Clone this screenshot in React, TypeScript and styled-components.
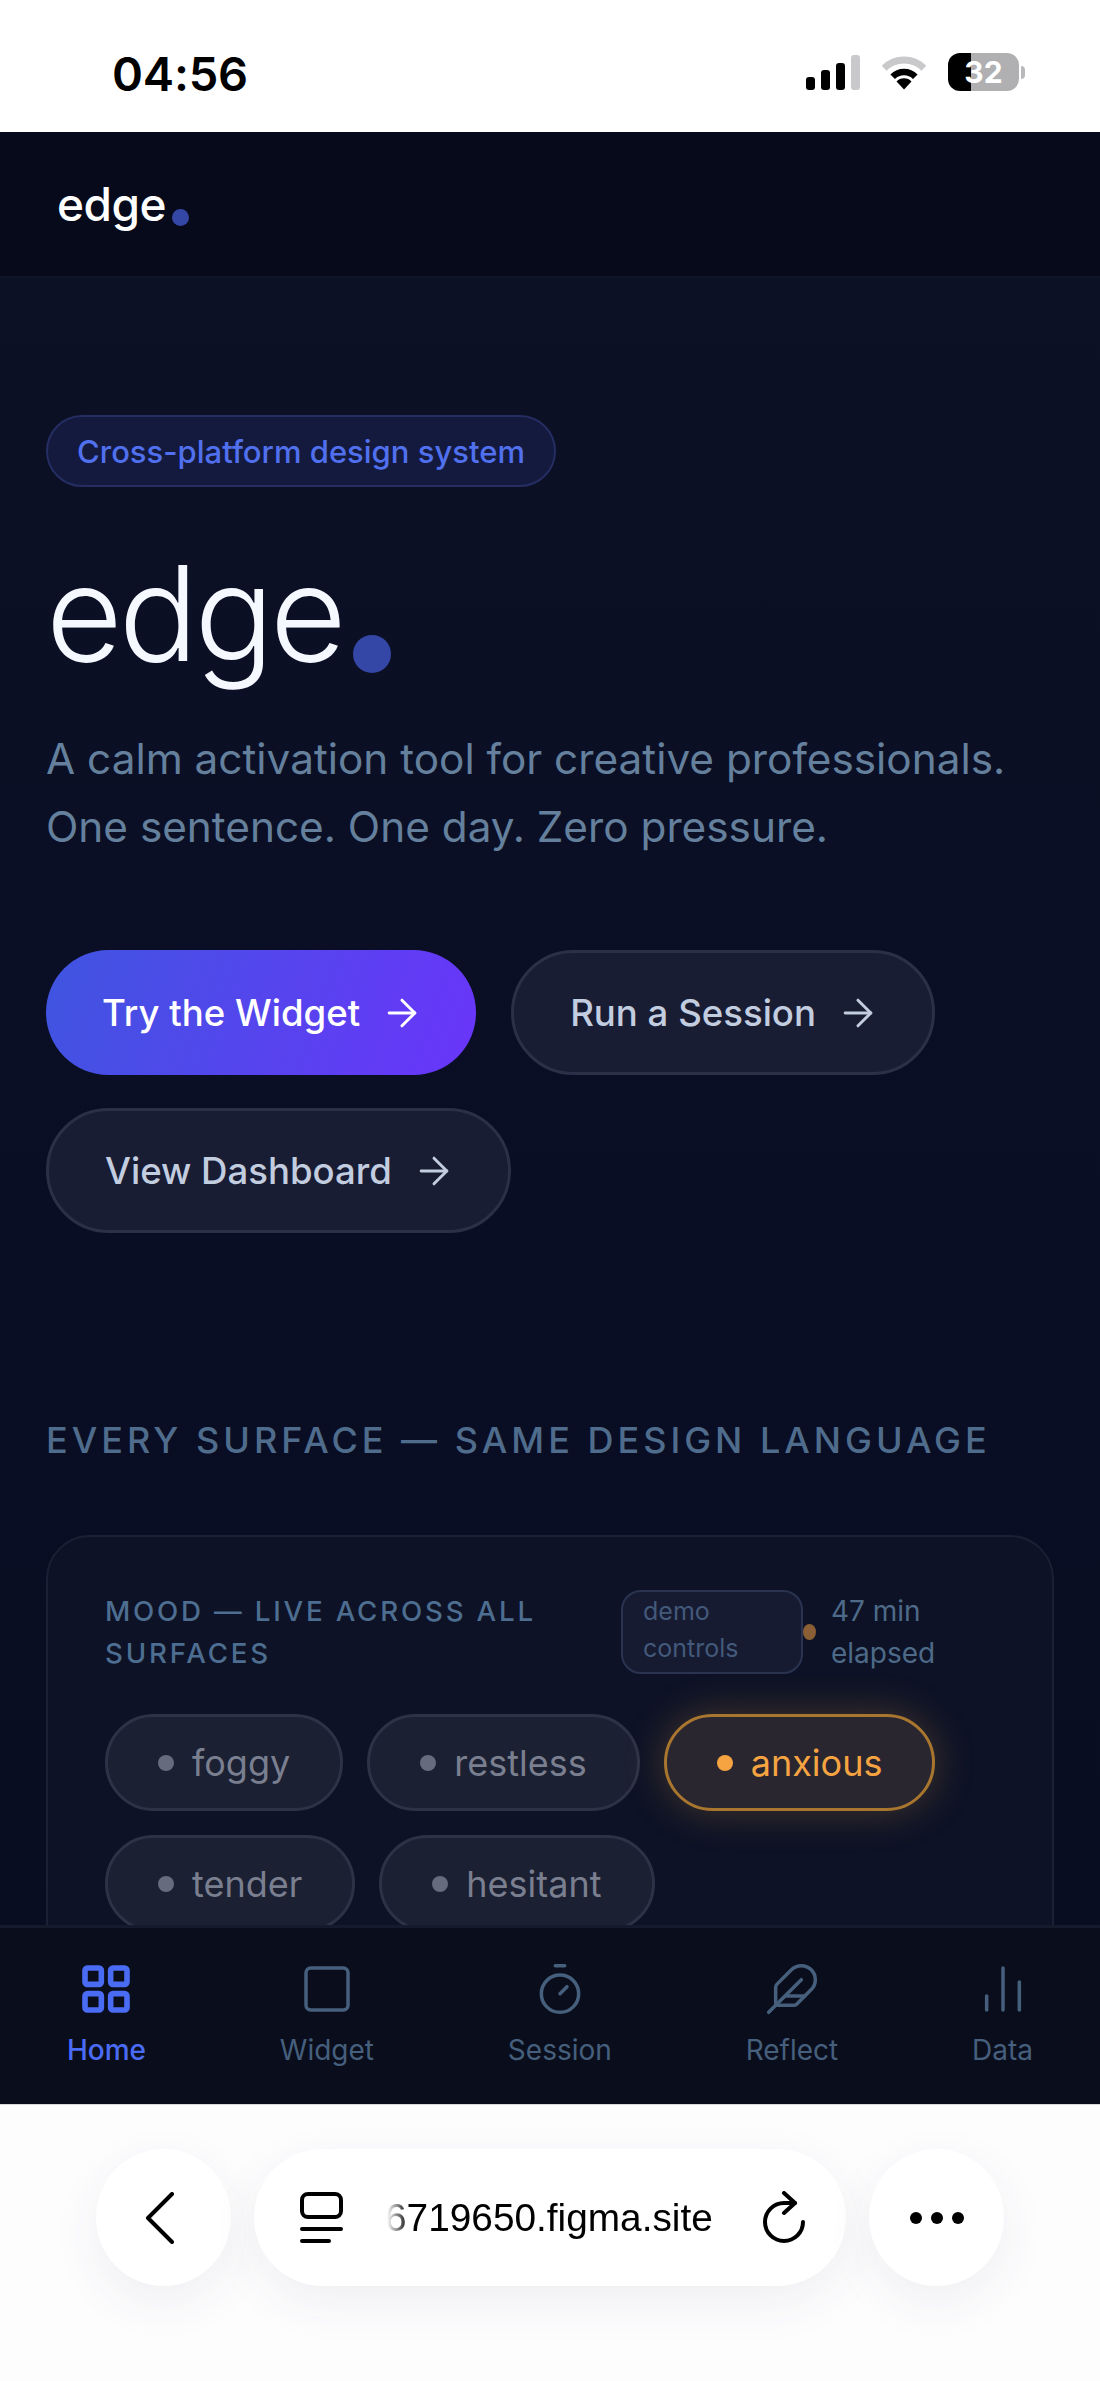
import styled, { createGlobalStyle } from 'styled-components';
import {
  ArrowRight,
  ChartNoAxesColumn,
  Feather,
  LayoutGrid,
  Square,
  Timer,
} from 'lucide-react';

const GlobalStyle = createGlobalStyle`
  html, body {
    margin: 0;
    padding: 0;
    background: #fff;
  }
  body {
    font-family: Inter, "Liberation Sans", sans-serif;
  }
`;

const Phone = styled.div`
  width: 1100px;
  height: 2381px;
  display: flex;
  flex-direction: column;
  overflow: hidden;
`;

const StatusBar = styled.div`
  height: 132px;
  flex: none;
  background: #fff;
  display: flex;
  align-items: center;
  justify-content: space-between;
  padding: 0 75px 0 112px;
  box-sizing: border-box;
`;

const Clock = styled.div`
  padding-top: 14px;
  font-size: 47px;
  font-weight: 600;
  color: #000;
  letter-spacing: -0.2px;
`;

const StatusIcons = styled.div`
  display: flex;
  align-items: center;
  gap: 21px;
  padding-top: 12px;
`;

const Signal = styled.div`
  display: flex;
  align-items: flex-end;
  gap: 6px;
  height: 36px;
`;

const SignalBar = styled.span<{ $h: number; $off?: boolean }>`
  width: 9px;
  height: ${(p) => p.$h}px;
  border-radius: 3px;
  background: ${(p) => (p.$off ? '#c9c9cc' : '#000')};
`;

const BatteryWrap = styled.div`
  display: flex;
  align-items: center;
  gap: 2px;
`;

const Battery = styled.div`
  width: 71px;
  height: 38px;
  border-radius: 12px;
  background: linear-gradient(to right, #000 23px, #b0afb2 23px);
  color: #fff;
  font-family: Inter, sans-serif;
  font-weight: 700;
  font-size: 30px;
  display: flex;
  align-items: center;
  justify-content: center;
`;

const BatteryTip = styled.span`
  width: 4px;
  height: 13px;
  border-radius: 0 4px 4px 0;
  background: #b9b8bb;
`;

const Screen = styled.div`
  flex: 1;
  min-height: 0;
  display: flex;
  flex-direction: column;
  background: linear-gradient(180deg, #0c1125 0%, #0a0e25 55%, #090d21 100%);
`;

const Header = styled.header`
  height: 146px;
  flex: none;
  box-sizing: border-box;
  padding-left: 57px;
  display: flex;
  align-items: center;
  background: #060a1b;
  border-bottom: 2px solid #10152a;
`;

const Logo = styled.div`
  font-size: 46px;
  font-weight: 500;
  letter-spacing: -0.5px;
  color: #fff;
  line-height: 1;
`;

const LogoDot = styled.span<{ $size: number; $drop: number; $gap: number }>`
  display: inline-block;
  width: ${(p) => p.$size}px;
  height: ${(p) => p.$size}px;
  margin-left: ${(p) => p.$gap}px;
  vertical-align: -${(p) => p.$drop}px;
  border-radius: 50%;
  background: #3547a6;
`;

const Main = styled.main`
  flex: 1;
  min-height: 0;
  overflow: hidden;
  padding: 137px 46px 0;
`;

const Pill = styled.div`
  display: inline-flex;
  align-items: center;
  height: 72px;
  box-sizing: border-box;
  padding: 0 29px;
  border-radius: 36px;
  background: #141a3e;
  border: 2px solid #252e63;
  color: #5070ee;
  font-size: 31px;
  font-weight: 500;
  vertical-align: top;
`;

const Title = styled.h1`
  margin: 60px 0 0;
  font-size: 132px;
  line-height: 1;
  font-weight: 300;
  letter-spacing: -3.8px;
  color: #f6f8ff;
`;

const Lead = styled.p`
  margin: 46px 0 0;
  font-size: 42.3px;
  line-height: 68px;
  font-weight: 400;
  color: #64809c;
`;

const Actions = styled.div`
  margin-top: 89px;
  display: flex;
  flex-wrap: wrap;
  gap: 33px 35px;
`;

const ActionButton = styled.button<{ $primary?: boolean }>`
  height: 125px;
  box-sizing: border-box;
  padding: 0 52px 0 56px;
  display: inline-flex;
  align-items: center;
  gap: 20px;
  border-radius: 63px;
  font-family: inherit;
  font-size: 36.6px;
  font-weight: 500;
  color: ${(p) => (p.$primary ? '#fff' : '#c3cde0')};
  background: ${(p) =>
    p.$primary ? 'linear-gradient(110deg, #3f55e0 0%, #6a35fa 100%)' : '#191d33'};
  border: ${(p) => (p.$primary ? 'none' : '3px solid #2a3048')};
`;

const SectionTitle = styled.h2`
  margin: 185px 0 0;
  font-size: 36px;
  line-height: 44px;
  font-weight: 500;
  letter-spacing: 4px;
  color: #4f6c8c;
`;

const Card = styled.section`
  margin-top: 73px;
  padding: 53px 57px 60px;
  border-radius: 44px;
  background: #0d1226;
  border: 2px solid #1a2036;
`;

const CardHead = styled.div`
  display: flex;
  align-items: center;
`;

const CardTitle = styled.div`
  flex: 1;
  min-width: 0;
  padding-right: 60px;
  font-size: 27.7px;
  line-height: 42px;
  font-weight: 500;
  letter-spacing: 2.8px;
  color: #4d6e90;
`;

const DemoBox = styled.div`
  width: 182px;
  height: 84px;
  flex: none;
  box-sizing: border-box;
  padding: 1px 20px;
  border-radius: 20px;
  background: #161b32;
  border: 2px solid #2a3350;
  font-size: 25px;
  line-height: 37px;
  color: #43597a;
`;

const Elapsed = styled.div`
  width: 192px;
  flex: none;
  display: flex;
  align-items: center;
  gap: 15px;
  font-size: 28px;
  line-height: 42px;
  color: #4d6a88;
`;

const ElapsedDot = styled.span`
  width: 13px;
  height: 16px;
  flex: none;
  border-radius: 50%;
  background: #8a5f35;
`;

const Chips = styled.div`
  margin-top: 40px;
  display: flex;
  flex-wrap: wrap;
  gap: 24px;
`;

const Chip = styled.div<{ $active?: boolean }>`
  height: 97px;
  box-sizing: border-box;
  padding: 0 50px;
  display: inline-flex;
  align-items: center;
  gap: 18px;
  border-radius: 49px;
  font-size: 36px;
  color: ${(p) => (p.$active ? '#f5a441' : '#7a7f90')};
  background: ${(p) => (p.$active ? '#292630' : '#1c2033')};
  border: 3px solid ${(p) => (p.$active ? '#a8762f' : '#2d3246')};
  box-shadow: ${(p) => (p.$active ? '0 0 40px rgba(245, 164, 65, 0.25)' : 'none')};
`;

const ChipDot = styled.span<{ $active?: boolean }>`
  width: 16px;
  height: 16px;
  border-radius: 50%;
  background: ${(p) => (p.$active ? '#f5a441' : '#666b7e')};
`;

const Nav = styled.nav`
  height: 179px;
  flex: none;
  box-sizing: border-box;
  padding-top: 33px;
  display: flex;
  justify-content: space-around;
  background: #0a0e1c;
  border-top: 3px solid #151a2c;
`;

const NavItem = styled.div<{ $active?: boolean }>`
  display: flex;
  flex-direction: column;
  align-items: center;
  gap: 15px;
  font-size: 28px;
  line-height: 36px;
  font-weight: ${(p) => (p.$active ? 500 : 400)};
  color: ${(p) => (p.$active ? '#4a6cf5' : '#465f7c')};
`;

const BrowserBar = styled.div`
  height: 277px;
  flex: none;
  box-sizing: border-box;
  padding-top: 44px;
  display: flex;
  justify-content: center;
  align-items: flex-start;
  gap: 23px;
  background: #fdfdfe;
  border-top: 1px solid #d8d8da;
`;

const RoundButton = styled.div<{ $nudge?: number }>`
  width: 135px;
  height: 137px;
  box-sizing: border-box;
  padding-right: ${(p) => p.$nudge ?? 0}px;
  border-radius: 50%;
  background: #fff;
  box-shadow: 0 16px 50px rgba(60, 50, 90, 0.07);
  display: flex;
  align-items: center;
  justify-content: center;
`;

const UrlPill = styled.div`
  width: 592px;
  height: 137px;
  box-sizing: border-box;
  padding: 0 40px 0 46px;
  border-radius: 69px;
  background: #fff;
  box-shadow: 0 16px 50px rgba(60, 50, 90, 0.07);
  display: flex;
  align-items: center;
`;

const UrlText = styled.div`
  flex: 1;
  min-width: 0;
  margin-left: 42px;
  overflow: hidden;
  white-space: nowrap;
  font-family: "Liberation Sans", Arial, sans-serif;
  font-size: 38.8px;
  color: #000;
  mask-image: linear-gradient(to right, transparent 2px, #000 24px);
`;

const Dots = styled.div`
  display: flex;
  gap: 9px;
`;

const Dot = styled.span`
  width: 12px;
  height: 12px;
  border-radius: 50%;
  background: #000;
`;

const moods = ['foggy', 'restless', 'anxious', 'tender', 'hesitant'];

const actions = [
  { label: 'Try the Widget', primary: true },
  { label: 'Run a Session' },
  { label: 'View Dashboard' },
];

const navItems = [
  { label: 'Home', Icon: LayoutGrid, active: true },
  { label: 'Widget', Icon: Square },
  { label: 'Session', Icon: Timer },
  { label: 'Reflect', Icon: Feather },
  { label: 'Data', Icon: ChartNoAxesColumn },
];

function WifiIcon() {
  return (
    <svg width="46" height="36" viewBox="0 0 46 36" fill="none">
      <path d="M3.2 14.2A28 28 0 0 1 42.8 14.2" stroke="#c9c9cc" strokeWidth="7" />
      <path d="M11.7 22.7A16 16 0 0 1 34.3 22.7" stroke="#000" strokeWidth="6.5" />
      <path d="M23 35.5L15.5 27.5A10.5 10.5 0 0 1 30.5 27.5Z" fill="#000" />
    </svg>
  );
}

function BackIcon() {
  return (
    <svg width="30" height="52" viewBox="0 0 30 52" fill="none" stroke="#000" strokeWidth="4" strokeLinecap="round" strokeLinejoin="round">
      <path d="M27 2L3 26L27 50" />
    </svg>
  );
}

function ReaderIcon() {
  return (
    <svg width="43" height="52" viewBox="0 0 43 52" fill="none" stroke="#000" strokeWidth="4" strokeLinecap="round">
      <rect x="2" y="2" width="39" height="23" rx="6" />
      <path d="M2 37H41" />
      <path d="M2 49H29" />
    </svg>
  );
}

function ReloadIcon() {
  return (
    <svg width="43" height="54" viewBox="0 0 43 54" fill="none" stroke="#000" strokeWidth="4" strokeLinecap="round" strokeLinejoin="round">
      <path d="M32 12H21A19 19 0 1 0 40 31" />
      <path d="M21 2L32 12L21 22" />
    </svg>
  );
}

export default function App() {
  return (
    <Phone>
      <GlobalStyle />
      <StatusBar>
        <Clock>04:56</Clock>
        <StatusIcons>
          <Signal>
            <SignalBar $h={13} />
            <SignalBar $h={20} />
            <SignalBar $h={27} />
            <SignalBar $h={35} $off />
          </Signal>
          <WifiIcon />
          <BatteryWrap>
            <Battery>32</Battery>
            <BatteryTip />
          </BatteryWrap>
        </StatusIcons>
      </StatusBar>
      <Screen>
        <Header>
          <Logo>
            edge
            <LogoDot $size={17} $drop={5} $gap={6} />
          </Logo>
        </Header>
        <Main>
          <Pill>Cross-platform design system</Pill>
          <Title>
            edge
            <LogoDot $size={38} $drop={12} $gap={10} />
          </Title>
          <Lead>
            A calm activation tool for creative professionals.
            <br />
            One sentence. One day. Zero pressure.
          </Lead>
          <Actions>
            {actions.map((a) => (
              <ActionButton key={a.label} $primary={a.primary}>
                {a.label}
                <ArrowRight size={44} strokeWidth={1.6} />
              </ActionButton>
            ))}
          </Actions>
          <SectionTitle>EVERY SURFACE — SAME DESIGN LANGUAGE</SectionTitle>
          <Card>
            <CardHead>
              <CardTitle>MOOD — LIVE ACROSS ALL SURFACES</CardTitle>
              <DemoBox>demo controls</DemoBox>
              <Elapsed>
                <ElapsedDot />
                47 min elapsed
              </Elapsed>
            </CardHead>
            <Chips>
              {moods.map((m) => (
                <Chip key={m} $active={m === 'anxious'}>
                  <ChipDot $active={m === 'anxious'} />
                  {m}
                </Chip>
              ))}
            </Chips>
          </Card>
        </Main>
        <Nav>
          {navItems.map(({ label, Icon, active }) => (
            <NavItem key={label} $active={active}>
              <Icon size={56} strokeWidth={active ? 2.4 : 1.5} />
              {label}
            </NavItem>
          ))}
        </Nav>
      </Screen>
      <BrowserBar>
        <RoundButton $nudge={8}>
          <BackIcon />
        </RoundButton>
        <UrlPill>
          <ReaderIcon />
          <UrlText>6719650.figma.site</UrlText>
          <ReloadIcon />
        </UrlPill>
        <RoundButton>
          <Dots>
            <Dot />
            <Dot />
            <Dot />
          </Dots>
        </RoundButton>
      </BrowserBar>
    </Phone>
  );
}
